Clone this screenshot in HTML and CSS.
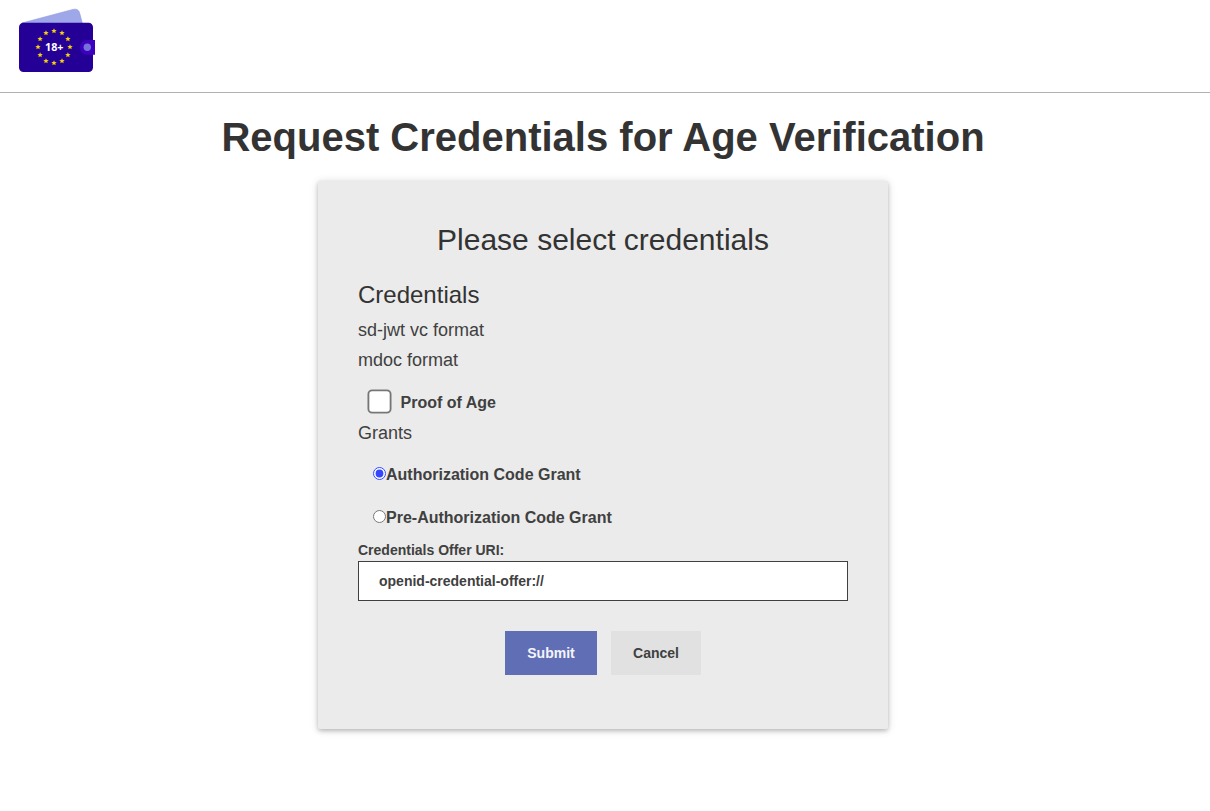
FILE: index.html
```html
<!DOCTYPE html>
<html lang="en">
<head>
<meta charset="utf-8">
<title>Request Credentials for Age Verification</title>
<link rel="stylesheet" href="styles.css">
</head>
<body>
<header class="header">
<svg class="logo" width="76" height="64" viewBox="19 8 76 64" role="img" aria-label="Age verification wallet">
<defs><path id="star" d="M0-2.8 .75-.95 2.7-.87 1.2.4 1.7 2.3 0 1.2-1.7 2.3-1.2.4-2.7-.87-.75-.95z"/></defs>
<path d="M22 23 73 9.400Q78 8.200 79.500 12.500L82.500 24z" fill="#9ea8e8" stroke="#8995df" stroke-width=".6"/>
<rect x="19" y="22.700" width="74" height="49.300" rx="4.500" fill="#250096"/>
<path d="M95 40H87.300a7.300 7.300 0 0 0 0 14.700H95z" fill="#3d00bf"/>
<circle cx="87.300" cy="47.300" r="3.700" fill="#7670d9"/>
<g fill="#f5cf12">
<use href="#star" x="54" y="31"/><use href="#star" x="62" y="33"/><use href="#star" x="67.900" y="39"/>
<use href="#star" x="70" y="47"/><use href="#star" x="67.900" y="55"/><use href="#star" x="62" y="61"/>
<use href="#star" x="54" y="63"/><use href="#star" x="46" y="61"/><use href="#star" x="40.100" y="55"/>
<use href="#star" x="38" y="47"/><use href="#star" x="40.100" y="39"/><use href="#star" x="46" y="33"/>
</g>
<text class="logo-text" x="45" y="50.700" textLength="18.500" lengthAdjust="spacingAndGlyphs">18+</text>
</svg>
</header>
<main class="main">
<h1 class="title">Request Credentials for Age Verification</h1>
<form class="card">
<h2 class="subtitle">Please select credentials</h2>
<h3 class="section">Credentials</h3>
<p class="line">sd-jwt vc format</p>
<p class="line">mdoc format</p>
<label class="option option-check"><input class="check" type="checkbox">Proof of Age</label>
<p class="line grants">Grants</p>
<label class="option option-radio"><input class="radio" type="radio" name="grant" checked>Authorization Code Grant</label>
<label class="option option-radio"><input class="radio" type="radio" name="grant">Pre-Authorization Code Grant</label>
<label class="uri-label" for="uri">Credentials Offer URI:</label>
<input class="uri" id="uri" type="text" value="openid-credential-offer://">
<div class="actions">
<button class="btn btn-submit" type="button">Submit</button>
<button class="btn btn-cancel" type="button">Cancel</button>
</div>
</form>
</main>
</body>
</html>
```
FILE: styles.css
```css
* { box-sizing: border-box; }
body { margin: 0; min-height: 100vh; background: #fff; color: #404040; font-family: "Liberation Sans", Arial, sans-serif; }
.header { height: 93px; padding: 8px 19px; border-bottom: 1px solid #b1b1b1; }
.logo { display: block; }
.logo-text { font: 700 10.2px "Noto Sans", sans-serif; fill: #fff; }
.main { display: flex; flex-direction: column; align-items: center; padding: 19px 4px 60px 0; }
.title { margin: 0 0 19px; font-size: 40px; line-height: 50px; color: #333; }
.card { display: flex; flex-direction: column; width: 570px; height: 548px; padding: 40px; background: #ebebeb; box-shadow: 0 2px 4px rgba(0,0,0,.2), 0 1px 10px rgba(0,0,0,.14); border-radius: 2px; }
.subtitle { margin: 0 0 21px; font-size: 30px; line-height: 38px; font-weight: 400; text-align: center; color: #333; }
.section { margin: 0 0 5px; font-size: 24px; line-height: 30px; font-weight: 400; color: #333; }
.line { margin: 0; font-size: 18px; line-height: 30px; }
.option { display: flex; align-items: flex-start; padding-left: 15px; font-size: 16px; line-height: 24px; font-weight: 700; }
.option-check { margin-top: 16px; gap: 14.5px; }
.check { width: 13px; height: 13px; margin: 4px 0 0; transform: scale(1.85); }
.grants { margin-top: 3px; }
.option-radio { margin-top: 15px; }
.option-radio + .option-radio { margin-top: 19px; }
.radio { width: 13px; height: 13px; margin: 4px 0 0; accent-color: #3347ff; }
.uri-label { margin-top: 10px; font-size: 14px; line-height: 21px; font-weight: 700; }
.uri { height: 40px; padding: 0 20px; border: 1px solid #404040; border-radius: 0; background: #fff; color: #404040; font: 700 14px "Liberation Sans", Arial, sans-serif; }
.actions { display: flex; justify-content: center; gap: 14px; margin-top: 30px; }
.btn { height: 44px; padding: 0; border: 0; color: #404040; font: 700 14px "Liberation Sans", Arial, sans-serif; }
.btn-submit { width: 92px; background: #606fb5; color: #f4f4fa; }
.btn-cancel { width: 90px; background: #e1e1e1; }
```
